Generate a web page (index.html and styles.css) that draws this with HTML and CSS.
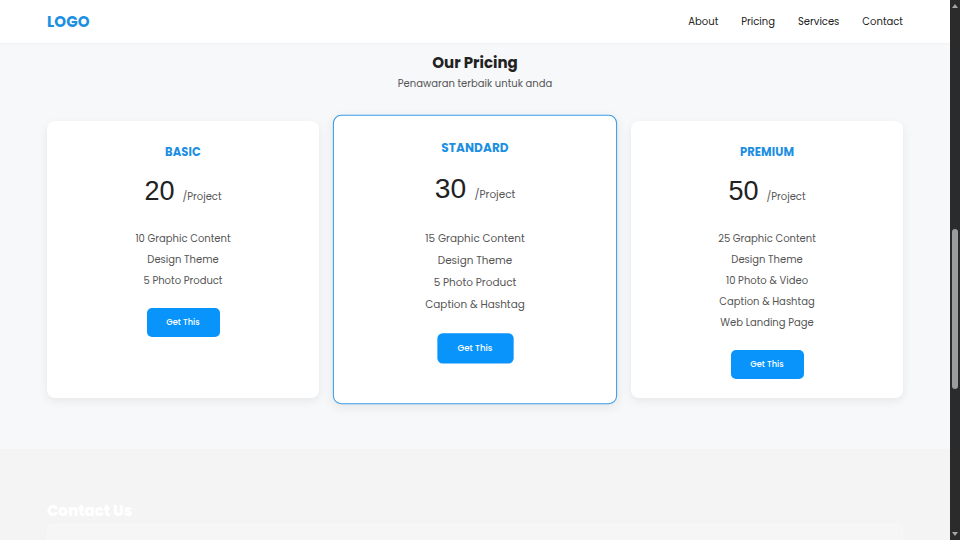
FILE: index.html
```html
<!DOCTYPE html>
<html lang="id">
<head>
<meta charset="utf-8">
<title>Pricing</title>
<link rel="stylesheet" href="styles.css">
</head>
<body>
<div class="page">
  <header class="navbar">
    <div class="container nav-inner">
      <a class="logo" href="#">LOGO</a>
      <nav class="menu">
        <a href="#">About</a>
        <a href="#">Pricing</a>
        <a href="#">Services</a>
        <a href="#">Contact</a>
      </nav>
    </div>
  </header>

  <section class="pricing">
    <div class="container">
      <h2 class="section-title">Our Pricing</h2>
      <p class="section-sub">Penawaran terbaik untuk anda</p>
      <div class="cards">
        <div class="card">
          <h3 class="plan">BASIC</h3>
          <div class="price"><span class="amount">20</span><span class="unit">/Project</span></div>
          <ul class="features">
            <li>10 Graphic Content</li>
            <li>Design Theme</li>
            <li>5 Photo Product</li>
          </ul>
          <a class="btn" href="#">Get This</a>
        </div>
        <div class="card featured">
          <h3 class="plan">STANDARD</h3>
          <div class="price"><span class="amount">30</span><span class="unit">/Project</span></div>
          <ul class="features">
            <li>15 Graphic Content</li>
            <li>Design Theme</li>
            <li>5 Photo Product</li>
            <li>Caption &amp; Hashtag</li>
          </ul>
          <a class="btn" href="#">Get This</a>
        </div>
        <div class="card">
          <h3 class="plan">PREMIUM</h3>
          <div class="price"><span class="amount">50</span><span class="unit">/Project</span></div>
          <ul class="features">
            <li>25 Graphic Content</li>
            <li>Design Theme</li>
            <li>10 Photo &amp; Video</li>
            <li>Caption &amp; Hashtag</li>
            <li>Web Landing Page</li>
          </ul>
          <a class="btn" href="#">Get This</a>
        </div>
      </div>
    </div>
  </section>

  <section class="contact">
    <div class="container">
      <h2 class="contact-title">Contact Us</h2>
      <div class="field"></div>
    </div>
  </section>
</div>

<div class="scrollbar">
  <span class="arrow up"></span>
  <span class="thumb"></span>
  <span class="arrow down"></span>
</div>
</body>
</html>
```
FILE: styles.css
```css
* { box-sizing: border-box; }
html, body { margin: 0; padding: 0; height: 100%; overflow: hidden; }
body {
  font-family: "Poppins", "Open Sans", "DejaVu Sans", sans-serif;
  background: #f7f8fa;
  color: #333;
}
a { text-decoration: none; color: inherit; }

.page { width: 950px; height: 540px; overflow: hidden; }
.container { width: 856px; margin: 0 auto; }

.navbar {
  height: 43px;
  background: #fff;
  box-shadow: 0 1px 2px rgba(0,0,0,0.03);
  position: relative;
  z-index: 2;
}
.nav-inner { height: 43px; display: flex; align-items: center; justify-content: space-between; }
.logo { color: #1c8fe2; font-weight: 700; font-size: 15px; letter-spacing: 0.1px; }
.menu { display: flex; gap: 23px; }
.menu a { font-size: 10px; color: #222; font-weight: 400; }

.pricing { padding: 8px 0 51px; background: #f7f8fa; }
.section-title {
  margin: 0; text-align: center; font-size: 15px; line-height: 24px; font-weight: 700; color: #222;
}
.section-sub {
  margin: 0; text-align: center; font-size: 10px; line-height: 17px; color: #555;
}
.cards {
  margin-top: 29px;
  display: grid;
  grid-template-columns: repeat(3, 1fr);
  gap: 20px;
}
.card {
  background: #fff;
  border-radius: 8px;
  box-shadow: 0 3px 10px rgba(0,0,0,0.07);
  padding: 21px 20px 19px;
  text-align: center;
  height: 277px;
}
.card.featured {
  border: 1.5px solid #3a9be6;
  transform: scale(1.045);
  padding-top: 21px;
}
.plan { margin: 0; font-size: 11.5px; line-height: 20px; font-weight: 700; color: #1c8fe2; letter-spacing: 0.1px; }
.price { margin-top: 12px; height: 34px; display: flex; justify-content: center; align-items: baseline; gap: 8px; }
.amount { font-family: "Liberation Sans", Arial, sans-serif; font-size: 27px; line-height: 34px; color: #222; }
.unit { font-size: 10px; color: #555; }
.features { list-style: none; margin: 20px 0 0; padding: 0; }
.features li { font-size: 10px; line-height: 21px; color: #555; }
.btn {
  display: inline-block;
  margin-top: 17px;
  width: 73px; height: 29px; line-height: 29px;
  background: #0894fb;
  color: #fff; font-size: 8.3px; font-weight: 500;
  border-radius: 5px;
}

.contact { background: #f4f4f4; padding-top: 51px; height: 200px; }
.contact-title { margin: 0; font-size: 15px; line-height: 22px; font-weight: 800; color: #fff; }
.field { margin-top: 2px; height: 40px; border: 1px solid #f8f8f8; background: #f6f6f6; border-radius: 4px; }

.scrollbar {
  position: fixed; top: 0; right: 0; width: 10px; height: 540px;
  background: #2b2b2b;
}
.thumb {
  position: absolute; left: 2px; top: 229px; width: 6px; height: 160px;
  background: #9c9c9c; border-radius: 3px;
}
.arrow { position: absolute; left: 2px; width: 0; height: 0; border-left: 3px solid transparent; border-right: 3px solid transparent; }
.arrow.up { top: 4px; border-bottom: 4px solid #a6a6a6; }
.arrow.down { bottom: 4px; border-top: 4px solid #a6a6a6; }
```
